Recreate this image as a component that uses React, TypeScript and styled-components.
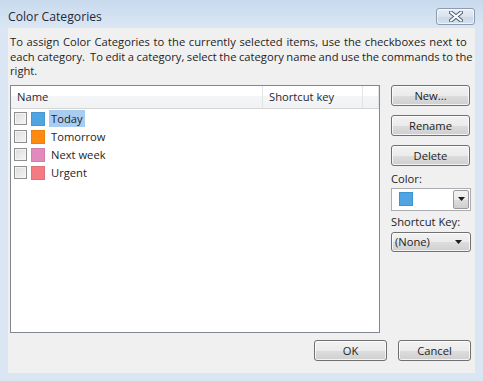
import styled, { createGlobalStyle } from 'styled-components';

const GlobalStyle = createGlobalStyle`
  html, body {
    margin: 0;
    padding: 0;
    background: #dbe6f3;
  }
  body {
    font-family: "Open Sans", "Noto Sans", sans-serif;
    font-size: 11.2px;
    color: #1e1e1e;
  }
`;

interface Category {
  name: string;
  color: string;
  selected?: boolean;
}

const categories: Category[] = [
  { name: 'Today', color: '#4ea5e2', selected: true },
  { name: 'Tomorrow', color: '#ff8a12' },
  { name: 'Next week', color: '#e38abd' },
  { name: 'Urgent', color: '#f47b84' },
];

const Window = styled.div`
  width: 483px;
  height: 381px;
  display: flex;
  flex-direction: column;
  background: linear-gradient(to bottom, #c9daee 0px, #dae6f3 28px, #dbe6f3 100%);
  overflow: hidden;
`;

const TitleBar = styled.div`
  height: 28px;
  display: flex;
  align-items: center;
  justify-content: space-between;
  padding: 4px 8px 0 8px;
  box-sizing: border-box;
`;

const Title = styled.div`
  font-size: 12.2px;
  color: #1e2a3a;
`;

const CloseButton = styled.div`
  width: 39px;
  height: 17px;
  box-sizing: border-box;
  border: 1px solid #8d9bb0;
  border-radius: 3px;
  background: linear-gradient(to bottom, #e8eef6 0%, #d9e3ef 50%, #cbd7e6 51%, #d7e2ee 100%);
  box-shadow: inset 0 0 0 1px rgba(255, 255, 255, 0.6);
  display: flex;
  align-items: center;
  justify-content: center;
`;

const Client = styled.div`
  flex: 1;
  margin: 0 8px 8px 8px;
  background: #f0f0f0;
  display: flex;
  flex-direction: column;
  padding: 7px 0 0 2px;
`;

const Intro = styled.div`
  line-height: 14.5px;
  white-space: nowrap;
  color: #1e1e1e;
`;

const IntroLine = styled.div<{ $wordSpacing?: number }>`
  word-spacing: ${(p) => p.$wordSpacing ?? 0}px;
`;

const Main = styled.div`
  display: flex;
  margin-top: 6px;
`;

const ListBox = styled.div`
  width: 370px;
  height: 248px;
  box-sizing: border-box;
  border: 1px solid #828790;
  background: #fff;
`;

const Header = styled.div`
  height: 23px;
  display: flex;
  box-sizing: border-box;
  border-bottom: 1px solid #d5d5d5;
  background: linear-gradient(to bottom, #ffffff 0%, #ffffff 45%, #f4f5f7 46%, #f1f2f4 100%);
`;

const HeaderCell = styled.div<{ $width?: number }>`
  width: ${(p) => (p.$width ? `${p.$width}px` : 'auto')};
  flex: ${(p) => (p.$width ? 'none' : '1')};
  padding-left: 6px;
  display: flex;
  align-items: center;
  box-sizing: border-box;
  border-right: 1px solid #e3e4e6;
  color: #1e2a3a;
`;

const Rows = styled.div`
  padding-top: 1px;
`;

const Row = styled.div`
  height: 18px;
  display: flex;
  align-items: center;
  padding-left: 3px;
`;

const CheckBox = styled.div`
  width: 13px;
  height: 13px;
  box-sizing: border-box;
  border: 1px solid #8e8f8f;
  background: linear-gradient(135deg, #dcdcdc 0%, #f6f6f6 100%);
  box-shadow: inset 0 0 0 1px #f4f4f4;
`;

const Swatch = styled.div<{ $color: string }>`
  width: 14px;
  height: 14px;
  margin-left: 4px;
  background: ${(p) => p.$color};
  box-sizing: border-box;
  border: 1px solid rgba(0, 0, 0, 0.08);
`;

const RowLabel = styled.div<{ $selected?: boolean }>`
  margin-left: 4px;
  padding: 0 2px;
  height: 17px;
  line-height: 17px;
  background: ${(p) => (p.$selected ? '#a9cdf0' : 'transparent')};
  color: #1e1e1e;
`;

const Side = styled.div`
  margin-left: 11px;
  width: 80px;
  display: flex;
  flex-direction: column;
`;

const Button = styled.div<{ $width?: number }>`
  width: ${(p) => p.$width ?? 79}px;
  height: 21px;
  box-sizing: border-box;
  border: 1px solid #707070;
  border-radius: 3px;
  background: linear-gradient(to bottom, #f2f2f2 0%, #ebebeb 50%, #dddddd 51%, #cfcfcf 100%);
  box-shadow: inset 0 0 0 1px rgba(255, 255, 255, 0.75);
  display: flex;
  align-items: center;
  justify-content: center;
  color: #1e1e1e;
  margin-bottom: 9px;
`;

const FieldLabel = styled.div`
  line-height: 14px;
  margin-top: -3px;
  color: #1e1e1e;
`;

const ColorBox = styled.div`
  margin-top: 2px;
  width: 80px;
  height: 23px;
  box-sizing: border-box;
  border: 1px solid #abadb3;
  background: #fff;
  display: flex;
  align-items: center;
  padding-left: 7px;
`;

const ColorSwatch = styled.div`
  width: 14px;
  height: 14px;
  background: #4ea5e2;
  border: 1px solid #3d94d3;
  box-sizing: border-box;
`;

const DropArrow = styled.div`
  margin-left: auto;
  margin-right: 1px;
  width: 16px;
  height: 19px;
  box-sizing: border-box;
  border: 1px solid #9a9a9a;
  border-radius: 2px;
  background: linear-gradient(to bottom, #f2f2f2 0%, #ebebeb 50%, #dddddd 51%, #cfcfcf 100%);
  display: flex;
  align-items: center;
  justify-content: center;
`;

const Select = styled.div`
  margin-top: 3px;
  width: 80px;
  height: 20px;
  box-sizing: border-box;
  border: 1px solid #707070;
  border-radius: 3px;
  background: linear-gradient(to bottom, #f2f2f2 0%, #ebebeb 50%, #dddddd 51%, #cfcfcf 100%);
  box-shadow: inset 0 0 0 1px rgba(255, 255, 255, 0.75);
  display: flex;
  align-items: center;
  padding: 0 8px 0 3px;
  justify-content: space-between;
`;

const Footer = styled.div`
  display: flex;
  justify-content: flex-end;
  gap: 11px;
  margin-top: 7px;
  padding-right: 4px;
`;

const Triangle = () => (
  <svg width="7" height="4" viewBox="0 0 7 4">
    <path d="M0 0 H7 L3.5 4 Z" fill="#1e1e1e" />
  </svg>
);

export default function App() {
  return (
    <>
      <GlobalStyle />
      <Window>
        <TitleBar>
          <Title>Color Categories</Title>
          <CloseButton>
            <svg width="14" height="11" viewBox="0 0 14 11">
              <path
                d="M2 1.5 L12 9.5 M12 1.5 L2 9.5"
                stroke="#4a5a70"
                strokeWidth="4"
                strokeLinecap="round"
              />
              <path
                d="M2 1.5 L12 9.5 M12 1.5 L2 9.5"
                stroke="#ffffff"
                strokeWidth="2.2"
                strokeLinecap="round"
              />
            </svg>
          </CloseButton>
        </TitleBar>
        <Client>
          <Intro>
            <IntroLine $wordSpacing={0.8}>
              To assign Color Categories to the currently selected items, use the checkboxes next to
            </IntroLine>
            <IntroLine $wordSpacing={-0.4}>
              each category.&nbsp; To edit a category, select the category name and use the commands to the
            </IntroLine>
            <IntroLine>right.</IntroLine>
          </Intro>
          <Main>
            <ListBox>
              <Header>
                <HeaderCell $width={252}>Name</HeaderCell>
                <HeaderCell $width={100}>Shortcut key</HeaderCell>
                <HeaderCell />
              </Header>
              <Rows>
                {categories.map((c) => (
                  <Row key={c.name}>
                    <CheckBox />
                    <Swatch $color={c.color} />
                    <RowLabel $selected={c.selected}>{c.name}</RowLabel>
                  </Row>
                ))}
              </Rows>
            </ListBox>
            <Side>
              <Button>New...</Button>
              <Button>Rename</Button>
              <Button>Delete</Button>
              <FieldLabel>Color:</FieldLabel>
              <ColorBox>
                <ColorSwatch />
                <DropArrow>
                  <Triangle />
                </DropArrow>
              </ColorBox>
              <FieldLabel style={{ marginTop: 4 }}>Shortcut Key:</FieldLabel>
              <Select>
                <span>(None)</span>
                <Triangle />
              </Select>
            </Side>
          </Main>
          <Footer>
            <Button $width={73}>OK</Button>
            <Button $width={73}>Cancel</Button>
          </Footer>
        </Client>
      </Window>
    </>
  );
}
